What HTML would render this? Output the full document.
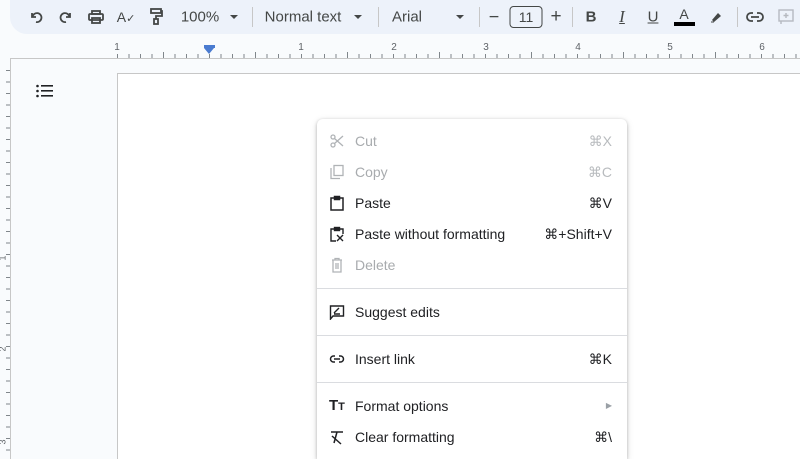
<!DOCTYPE html>
<html><head><style>
*{margin:0;padding:0;box-sizing:border-box}
html,body{width:800px;height:459px;overflow:hidden}
body{background:#f9fbfd;font-family:"Liberation Sans",Arial,sans-serif;position:relative;color:#202124}
.tb{position:absolute;left:10px;top:0;width:790px;height:34px;background:#edf2fa;border-radius:0 0 0 17px}
.a{position:absolute;top:17px;transform:translate(-50%,-50%);color:#444746;font-size:14px;white-space:nowrap}
.sep{position:absolute;top:7px;width:1px;height:20px;background:#c7c7c7}
.car{position:absolute;top:15px;width:0;height:0;border-left:4px solid transparent;border-right:4px solid transparent;border-top:4px solid #444746}
.ruler{position:absolute;left:117px;top:50px;width:683px;height:8px;background:repeating-linear-gradient(90deg,#80868b 0 1px,transparent 1px 11.5px);background-size:100% 4px;background-repeat:no-repeat;background-position:0 4px}
.rl{position:absolute;top:52px;width:1px;height:6px;background:#80868b}
.rn{position:absolute;top:42px;font-size:10px;color:#5f6368;transform:translateX(-50%)}
.area{position:absolute;left:10px;top:58px;width:790px;height:401px;border-top:1px solid #c7c7c7;border-left:1px solid #c7c7c7;background:#f9fbfd}
.page{position:absolute;left:117px;top:73px;width:683px;height:386px;background:#fff;border-top:1px solid #c7c7c7;border-left:1px solid #c7c7c7}
.vr{position:absolute;left:4px;top:70px;width:6px;height:389px;background:repeating-linear-gradient(180deg,#80868b 0 1px,transparent 1px 11.5px);background-size:4px 100%;background-repeat:no-repeat;background-position:2px 0}
.vn{position:absolute;left:0;font-size:9px;color:#5f6368;transform:rotate(-90deg)}
.menu{position:absolute;left:317px;top:119px;width:310px;height:340px;background:#fff;border-radius:6px 6px 0 0;box-shadow:0 1px 3px rgba(0,0,0,.25),0 2px 8px rgba(0,0,0,.12)}
.it{position:absolute;left:0;width:310px;height:20px;font-size:14px;line-height:20px}
.it .t{position:absolute;left:38px}
.it .k{position:absolute;right:15px;color:#5f6368}
.it svg{position:absolute;left:12px;top:2px}
.dis{color:#a8abae}.dis .k{color:#b8bbbe}
.div{position:absolute;left:0;width:310px;height:1px;background:#dadce0}
</style></head><body>
<div class="tb"></div>
<svg class="a" style="left:36px" width="16" height="16" viewBox="0 0 16 16" fill="none" stroke="#444746" stroke-width="1.8"><path d="M4 4v4h4M4.5 8A4.5 4.5 0 1 1 8 13"/></svg>
<svg class="a" style="left:66px" width="16" height="16" viewBox="0 0 16 16" fill="none" stroke="#444746" stroke-width="1.8"><path d="M12 4v4H8M11.5 8A4.5 4.5 0 1 0 8 13"/></svg>
<svg class="a" style="left:96px" width="18" height="16" viewBox="0 0 18 16" fill="none" stroke="#444746" stroke-width="1.8"><rect x="5" y="2" width="8" height="3"/><rect x="2" y="5" width="14" height="6" rx="1"/><rect x="5" y="9" width="8" height="5"/></svg>
<div class="a" style="left:126px;font-size:14px">A<span style="font-size:11px">✓</span></div>
<svg class="a" style="left:156px" width="14" height="18" viewBox="0 0 14 18" fill="none" stroke="#444746" stroke-width="1.8"><rect x="2" y="1" width="10" height="4"/><path d="M12 3h1v5H7v3"/><rect x="5" y="11" width="4" height="5"/></svg>
<div class="a" style="left:200px;font-size:15px">100%</div><div class="car" style="left:230px"></div>
<div class="sep" style="left:252px"></div>
<div class="a" style="left:303px;font-size:15px">Normal text</div><div class="car" style="left:354px"></div>
<div class="sep" style="left:378px"></div>
<div class="a" style="left:407px;font-size:15px">Arial</div><div class="car" style="left:456px"></div>
<div class="sep" style="left:479px"></div>
<div class="a" style="left:494px;font-size:18px">−</div>
<div class="a" style="left:526px;width:33px;height:22px;border:1px solid #444746;border-radius:4px;text-align:center;line-height:20px;font-size:14px">11</div>
<div class="a" style="left:556px;font-size:19px">+</div>
<div class="sep" style="left:572px"></div>
<div class="a" style="left:591px;font-weight:bold;font-size:15px">B</div>
<div class="a" style="left:622px;font-style:italic;font-family:'Liberation Serif',serif;font-size:17px;text-decoration:underline">I</div>
<div class="a" style="left:653px;text-decoration:underline;font-size:15px">U</div>
<div class="a" style="left:684px;top:14px;font-size:14px">A</div>
<div style="position:absolute;left:674px;top:22px;width:21px;height:4px;background:#000"></div>
<svg class="a" style="left:716px" width="14" height="14" viewBox="0 0 14 14"><path d="M3 10l6-7 3 3-7 6z" fill="#444746"/><path d="M2 12h3" stroke="#444746"/></svg>
<div class="sep" style="left:737px"></div>
<svg class="a" style="left:755px" width="18" height="10" viewBox="0 0 18 10" fill="none" stroke="#444746" stroke-width="1.8"><path d="M7 1H5a4 4 0 0 0 0 8h2M11 1h2a4 4 0 0 1 0 8h-2M5 5h8"/></svg>
<svg class="a" style="left:786px" width="16" height="16" viewBox="0 0 16 16" fill="none" stroke="#b6bac0" stroke-width="1.4"><rect x="1" y="1" width="14" height="11"/><path d="M8 4v5M5.5 6.5h5M3 12v3"/></svg>

<div class="area"></div>
<div class="page"></div>
<div class="ruler"></div>
<div class="rl" style="left:163px"></div><div class="rl" style="left:255px"></div><div class="rl" style="left:347px"></div><div class="rl" style="left:439px"></div><div class="rl" style="left:531px"></div><div class="rl" style="left:623px"></div><div class="rl" style="left:715px"></div>
<div class="rn" style="left:117px">1</div><div class="rn" style="left:301px">1</div><div class="rn" style="left:394px">2</div><div class="rn" style="left:486px">3</div><div class="rn" style="left:578px">4</div><div class="rn" style="left:670px">5</div><div class="rn" style="left:762px">6</div>
<div style="position:absolute;left:204px;top:45px;width:11px;height:3px;background:#4a7bd0"></div>
<div style="position:absolute;left:204px;top:48px;border-left:5.5px solid transparent;border-right:5.5px solid transparent;border-top:6px solid #4a7bd0"></div>
<div class="vr"></div>
<div class="vn" style="top:253px">1</div><div class="vn" style="top:344px">2</div><div class="vn" style="top:437px">3</div>
<svg style="position:absolute;left:36px;top:84px" width="18" height="14" viewBox="0 0 18 14" fill="#202124"><circle cx="1.5" cy="2" r="1.3"/><circle cx="1.5" cy="7" r="1.3"/><circle cx="1.5" cy="12" r="1.3"/><rect x="5" y="1" width="12" height="1.6"/><rect x="5" y="6" width="12" height="1.6"/><rect x="5" y="11" width="12" height="1.6"/></svg>

<div class="menu">
<div class="it dis" style="top:12px"><svg width="16" height="16" viewBox="0 0 16 16" fill="none" stroke="#b0b3b6" stroke-width="1.3"><circle cx="4" cy="4" r="2"/><circle cx="4" cy="12" r="2"/><path d="M5.5 5.5L14 13M5.5 10.5L14 3"/></svg><span class="t">Cut</span><span class="k">⌘X</span></div>
<div class="it dis" style="top:43px"><svg width="16" height="16" viewBox="0 0 16 16" fill="none" stroke="#b0b3b6" stroke-width="1.3"><rect x="5" y="1.5" width="9" height="10"/><path d="M2 4v10.5h9"/></svg><span class="t">Copy</span><span class="k">⌘C</span></div>
<div class="it" style="top:74px"><svg width="16" height="16" viewBox="0 0 16 16" fill="none" stroke="#202124" stroke-width="1.5"><rect x="2" y="3" width="12" height="12"/><rect x="5.5" y="1.5" width="5" height="3" fill="#202124"/></svg><span class="t">Paste</span><span class="k" style="color:#202124">⌘V</span></div>
<div class="it" style="top:105px"><svg width="16" height="16" viewBox="0 0 16 16" fill="none" stroke="#202124" stroke-width="1.4"><path d="M7 15H2V3h12v5"/><rect x="5.5" y="1.5" width="5" height="3" fill="#202124"/><path d="M8 9l6 6M14 9l-6 6"/></svg><span class="t">Paste without formatting</span><span class="k" style="color:#202124">⌘+Shift+V</span></div>
<div class="it dis" style="top:136px"><svg width="16" height="16" viewBox="0 0 16 16" fill="none" stroke="#b0b3b6" stroke-width="1.3"><path d="M3 3h10M6 3V1.5h4V3M4 3v12h8V3M7 6v6M9 6v6"/></svg><span class="t">Delete</span></div>
<div class="div" style="top:169px"></div>
<div class="it" style="top:183px"><svg width="16" height="16" viewBox="0 0 16 16" fill="none" stroke="#202124" stroke-width="1.4"><path d="M1.5 15V2h13v10H4z"/><path d="M5 10h6M5 9l5-5" /></svg><span class="t">Suggest edits</span></div>
<div class="div" style="top:216px"></div>
<div class="it" style="top:230px"><svg width="16" height="16" viewBox="0 0 16 16" fill="none" stroke="#202124" stroke-width="1.5"><path d="M6 5H4.5a3 3 0 0 0 0 6H6M10 5h1.5a3 3 0 0 1 0 6H10M5 8h6"/></svg><span class="t">Insert link</span><span class="k" style="color:#202124">⌘K</span></div>
<div class="div" style="top:263px"></div>
<div class="it" style="top:277px"><span style="position:absolute;left:12px;font-weight:bold;font-size:15px">T<span style="font-size:11px">T</span></span><span class="t">Format options</span><span class="k" style="font-size:8px;color:#9aa0a6">▶</span></div>
<div class="it" style="top:308px"><svg width="16" height="16" viewBox="0 0 16 16" fill="none" stroke="#202124" stroke-width="1.5"><path d="M2 3h12M8 3l-3 11M3 7l9 8"/></svg><span class="t">Clear formatting</span><span class="k" style="color:#202124">⌘\</span></div>
</div>
</body></html>
